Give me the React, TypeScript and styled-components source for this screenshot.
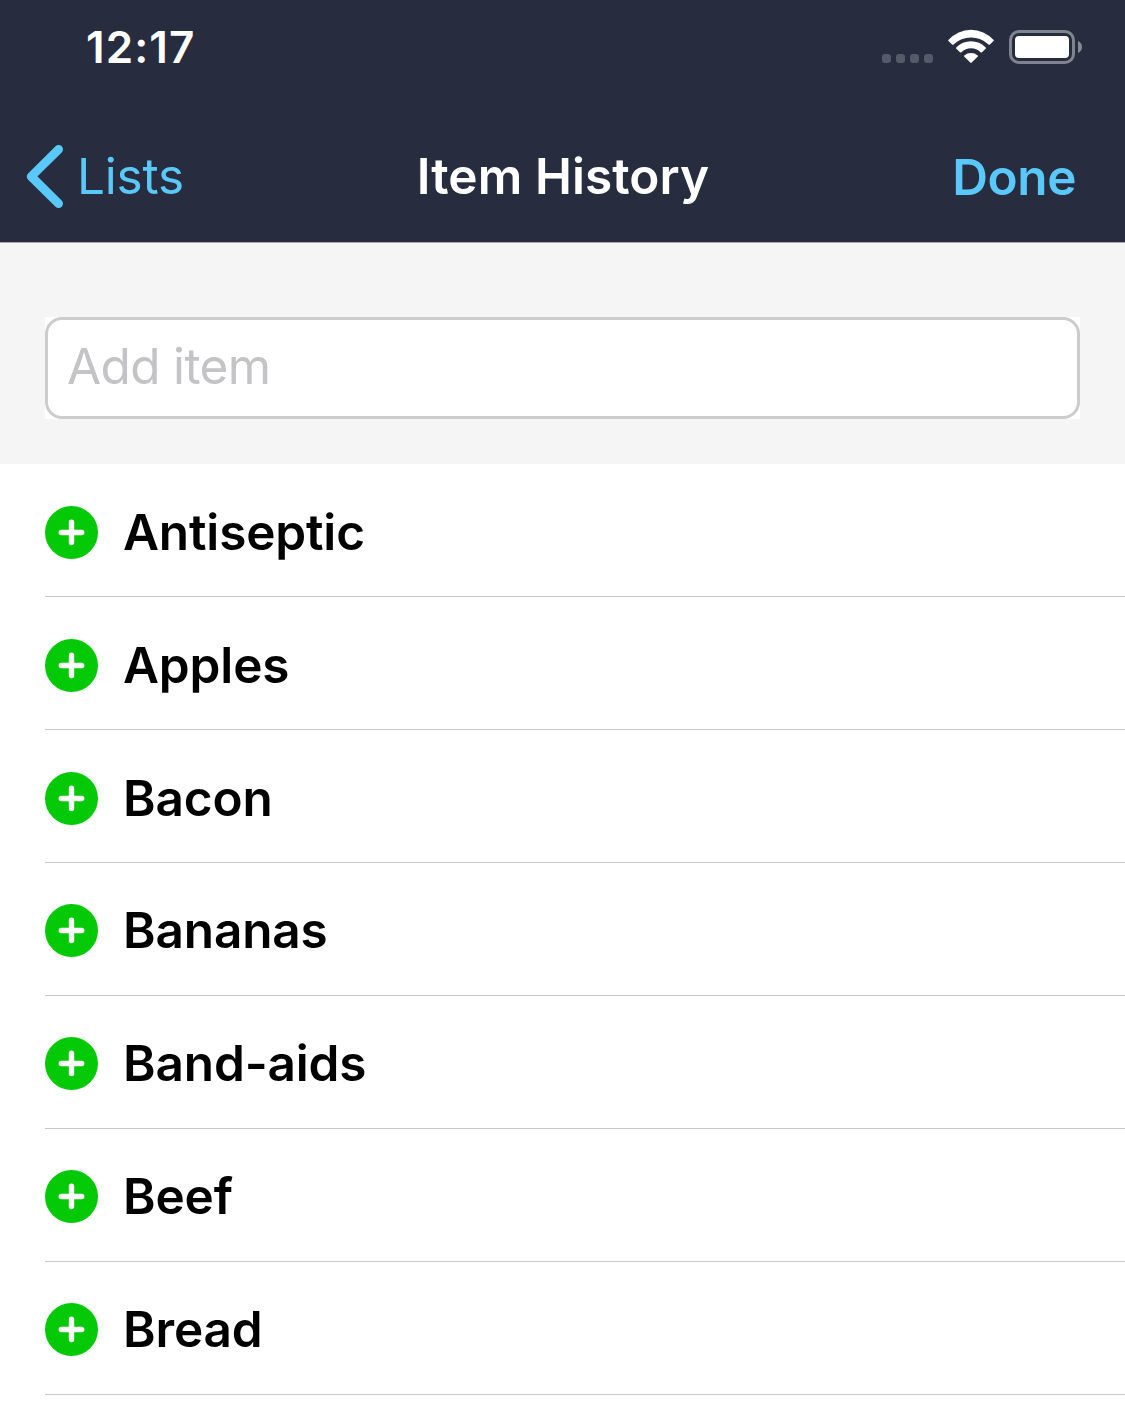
import React from "react";
import styled, { createGlobalStyle } from "styled-components";

const GlobalStyle = createGlobalStyle`
  * { box-sizing: border-box; }
  body {
    margin: 0;
    background: #ffffff;
    font-family: Inter, "Liberation Sans", sans-serif;
    -webkit-font-smoothing: antialiased;
  }
`;

const Screen = styled.main`
  width: 1125px;
  height: 1420px;
  overflow: hidden;
  background: #ffffff;
`;

const Header = styled.header`
  height: 243px;
  background: #272d3f;
  border-bottom: 1px solid #a8a7ab;
  color: #ffffff;
`;

const StatusBar = styled.div`
  display: flex;
  justify-content: space-between;
  height: 110px;
  padding: 17px 43px 0 86px;
`;

const Time = styled.span`
  font-size: 44px;
  font-weight: 600;
  line-height: 60px;
  letter-spacing: 1.1px;
`;

const StatusIcons = styled.div`
  display: flex;
  align-items: flex-end;
  height: 47px;
`;

const SignalDots = styled.div`
  display: flex;
  gap: 5px;
  margin: 0 14px 1px 0;
`;

const Dot = styled.i`
  width: 9px;
  height: 9px;
  border-radius: 3px;
  background: #555a68;
`;

const WifiIcon = styled.svg`
  display: block;
  width: 48px;
  height: 36px;
  margin-right: 14px;
`;

const BatteryIcon = styled.svg`
  display: block;
  width: 73px;
  height: 34px;
`;

const NavBar = styled.nav`
  display: grid;
  grid-template-columns: 1fr auto 1fr;
  align-items: center;
  height: 132px;
  padding: 0 24px 0 25px;
`;

const NavButton = styled.button<{ $strong?: boolean }>`
  display: flex;
  align-items: center;
  justify-self: ${(p) => (p.$strong ? "end" : "start")};
  padding: ${(p) => (p.$strong ? "2px 25px 0 0" : "0")};
  border: 0;
  background: none;
  color: #5ac8fa;
  font: ${(p) => (p.$strong ? 600 : 400)} 49.5px/60px Inter, "Liberation Sans", sans-serif;
  letter-spacing: ${(p) => (p.$strong ? "-0.4px" : "-0.2px")};
`;

const BackIcon = styled.svg`
  width: 40px;
  height: 66px;
  margin-right: 12px;
`;

const Title = styled.h1`
  margin: 0;
  font-size: 49.5px;
  font-weight: 600;
  line-height: 60px;
  letter-spacing: 0.1px;
`;

const AddSection = styled.section`
  height: 221px;
  padding: 74px 45px 45px;
  background: #f5f5f5;
`;

const InputBacking = styled.div`
  height: 102px;
  background: #ffffff;
`;

const AddInput = styled.input`
  display: block;
  width: 100%;
  height: 102px;
  padding: 0 19px 4px;
  border: 3px solid #cccccc;
  border-radius: 17px;
  outline: 0;
  background: #ffffff;
  color: #000000;
  font: 400 49.5px/60px Inter, "Liberation Sans", sans-serif;
  letter-spacing: -0.65px;

  &::placeholder {
    color: #c4c4c6;
    opacity: 1;
  }
`;

const ItemList = styled.ul`
  margin: 0;
  padding: 0 0 0 45px;
  list-style: none;
`;

const ItemRow = styled.li`
  display: flex;
  align-items: flex-start;
  height: 132.94px;
  padding-top: 41.66px;
  border-bottom: 1px solid #c8c7cc;
`;

const AddIcon = styled.svg`
  flex: none;
  width: 53px;
  height: 53px;
  margin-right: 25px;
`;

const ItemName = styled.span`
  font-size: 49.5px;
  font-weight: 600;
  line-height: 52px;
  letter-spacing: -0.15px;
  color: #000000;
`;

const items = ["Antiseptic", "Apples", "Bacon", "Bananas", "Band-aids", "Beef", "Bread"];

export default function App() {
  return (
    <>
      <GlobalStyle />
      <Screen>
        <Header>
          <StatusBar>
            <Time>12:17</Time>
            <StatusIcons>
              <SignalDots>
                <Dot />
                <Dot />
                <Dot />
                <Dot />
              </SignalDots>
              <WifiIcon viewBox="0 0 48 36" fill="#ffffff">
                <path d="M1.5 13Q0.9 12.4 1.6 11.8A30 30 0 0 1 46.4 11.8Q47.1 12.4 46.5 13L42.9 16.4Q42.2 16.9 41.5 16.4A25.5 25.5 0 0 0 6.5 16.4Q5.8 16.9 5.1 16.4Z" />
                <path d="M9.2 20.6Q8.6 20 9.3 19.4A20.5 20.5 0 0 1 38.7 19.4Q39.4 20 38.8 20.6L35 24.3Q34.3 24.8 33.6 24.3A13.2 13.2 0 0 0 14.4 24.3Q13.7 24.8 13 24.3Z" />
                <path d="M17.2 28.5Q16.6 27.9 17.3 27.4A10.5 10.5 0 0 1 30.7 27.4Q31.4 27.9 30.8 28.5L24.7 34.4Q24 35 23.3 34.4Z" />
              </WifiIcon>
              <BatteryIcon viewBox="0 0 73 34">
                <rect x="1.5" y="1.5" width="63" height="31" rx="8.5" fill="none" stroke="#7f848e" strokeWidth="3" />
                <rect x="6" y="6" width="54" height="22" rx="4" fill="#ffffff" />
                <path d="M69 11C71.6 12.2 73 14.3 73 17C73 19.7 71.6 21.8 69 23Z" fill="#858a94" />
              </BatteryIcon>
            </StatusIcons>
          </StatusBar>
          <NavBar>
            <NavButton>
              <BackIcon viewBox="0 0 40 66" fill="none">
                <path
                  d="M33.6 6.3L6.2 33.5L33.6 60.6"
                  stroke="#5ac8fa"
                  strokeWidth="8.8"
                  strokeLinecap="round"
                  strokeLinejoin="round"
                />
              </BackIcon>
              Lists
            </NavButton>
            <Title>Item History</Title>
            <NavButton $strong>Done</NavButton>
          </NavBar>
        </Header>
        <AddSection>
          <InputBacking>
            <AddInput placeholder="Add item" />
          </InputBacking>
        </AddSection>
        <ItemList>
          {items.map((name) => (
            <ItemRow key={name}>
              <AddIcon viewBox="0 0 53 53">
                <circle cx="26.5" cy="26.5" r="26.5" fill="#04c906" />
                <path d="M26.5 16.2V36.6M16.3 26.5H36.7" stroke="#ffffff" strokeWidth="5.4" strokeLinecap="round" />
              </AddIcon>
              <ItemName>{name}</ItemName>
            </ItemRow>
          ))}
        </ItemList>
      </Screen>
    </>
  );
}
